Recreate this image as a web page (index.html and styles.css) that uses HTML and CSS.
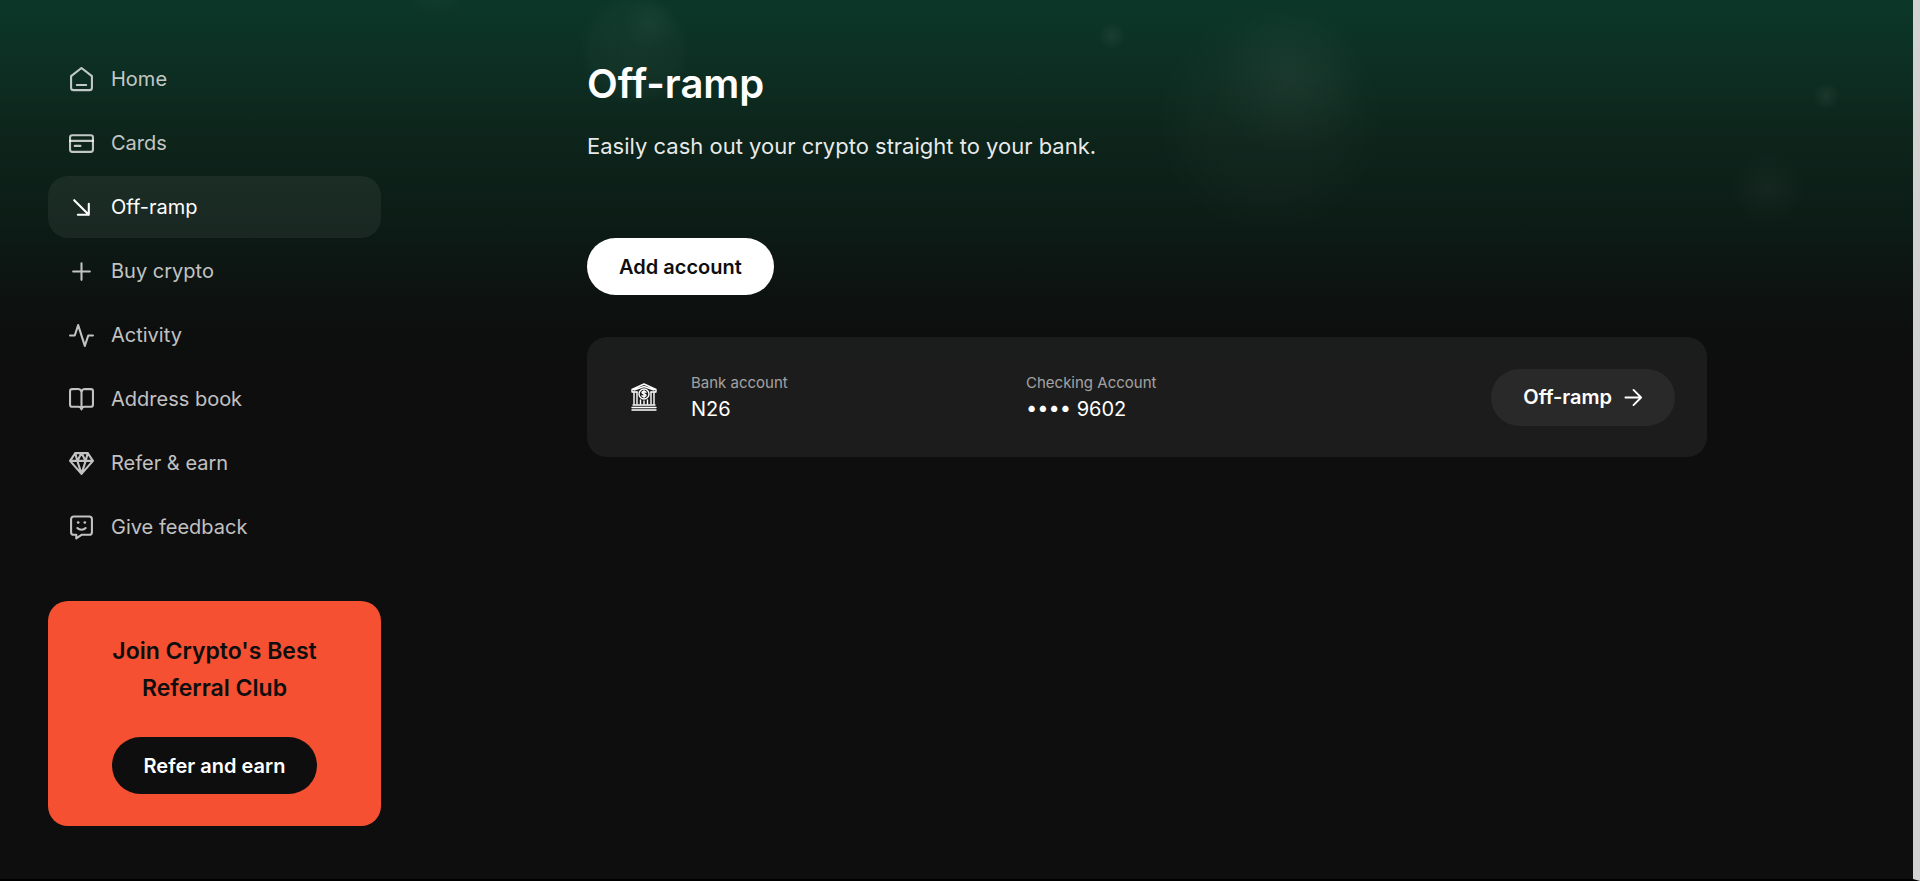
FILE: index.html
```html
<!DOCTYPE html>
<html lang="en">
<head>
    <meta charset="UTF-8">
    <meta name="viewport" content="width=device-width, initial-scale=1.0">
    <title>Off-ramp</title>
    <link rel="stylesheet" href="styles.css">
</head>
<body>
    <div class="page">
        <aside class="sidebar">
            <nav>
                <ul class="menu">
                    <li><a href="#home">
                        <svg class="icon" viewBox="0 0 24 24"><path d="M2 8.700 12 1l10 7.700v11.100a2.400 2.400 0 0 1-2.400 2.400H4.400A2.400 2.400 0 0 1 2 19.800z"/><path d="M7.500 17.200h9"/></svg>
                        Home
                    </a></li>
                    <li><a href="#cards">
                        <svg class="icon" viewBox="0 0 24 24"><rect x="1" y="4" width="22" height="16" rx="2.200"/><path d="M1 9.500h22M5.500 14.300h5.500"/></svg>
                        Cards
                    </a></li>
                    <li><a href="#off-ramp" class="active">
                        <svg class="icon" viewBox="0 0 24 24"><path d="m5 5 14 14M19 8.500V19H8.500"/></svg>
                        Off-ramp
                    </a></li>
                    <li><a href="#buy">
                        <svg class="icon" viewBox="0 0 24 24"><path d="M12 4v16M4 12h16"/></svg>
                        Buy crypto
                    </a></li>
                    <li><a href="#activity">
                        <svg class="icon" viewBox="0 0 24 24"><path d="M1 12h4.500l3.300-10 6.400 20 3.300-10H23"/></svg>
                        Activity
                    </a></li>
                    <li><a href="#address-book">
                        <svg class="icon" viewBox="0 0 24 24"><path d="M12 5a3.500 3.500 0 0 0-3.500-3H3a2 2 0 0 0-2 2v13a2 2 0 0 0 2 2h6a3 3 0 0 1 3 2.500 3 3 0 0 1 3-2.500h6a2 2 0 0 0 2-2V4a2 2 0 0 0-2-2h-5.500A3.500 3.500 0 0 0 12 5zM12 5v16"/></svg>
                        Address book
                    </a></li>
                    <li><a href="#refer">
                        <svg class="icon" viewBox="0 0 24 24"><path d="M6 2h12l5 7.500-11 12.500L1 9.500zM1 9.500h22M12 2 8 9.500 12 22l4-12.500zM6 2l2 7.500M18 2l-2 7.500"/></svg>
                        Refer &amp; earn
                    </a></li>
                    <li><a href="#feedback">
                        <svg class="icon" viewBox="0 0 24 24"><path d="M4.500 1.500h15A2.500 2.500 0 0 1 22 4v12.500a2.500 2.500 0 0 1-2.500 2.500H12l-5 3.500V19H4.500A2.500 2.500 0 0 1 2 16.500V4a2.500 2.500 0 0 1 2.500-2.500z"/><path d="M8 12.500c2 2.300 6 2.300 8 0"/><circle class="dot" cx="8.800" cy="7.200" r="1.300"/><circle class="dot" cx="15.200" cy="7.200" r="1.300"/></svg>
                        Give feedback
                    </a></li>
                </ul>
            </nav>

            <section class="promo">
                <h2>Join Crypto's Best Referral Club</h2>
                <button type="button" class="btn btn-dark">Refer and earn</button>
            </section>
        </aside>

        <main>
            <div class="container">
                <h1>Off-ramp</h1>
                <p class="intro">Easily cash out your crypto straight to your bank.</p>
                <button type="button" class="btn btn-light">Add account</button>

                <section class="account">
                    <svg class="bank-icon" viewBox="0 0 26 28">
                        <path d="M1 9V6.500L13 1l12 5.500V9h-5M1 9h5M3 7l10-3.500L23 7"/>
                        <path d="M3 9v12M6 9v12M20 9v12M23 9v12M9.500 17v4M13 18v3M16.500 17v4"/>
                        <path d="M2 22h22M1 24.500h24M1 27h24"/>
                        <circle cx="13" cy="11" r="5"/>
                        <path d="M15 9.200c-1-1-4-1-4 .4 0 1.600 4 1 4 2.700 0 1.500-3 1.500-4 .4M13 7.500v7"/>
                    </svg>
                    <dl class="details">
                        <div>
                            <dt>Bank account</dt>
                            <dd>N26</dd>
                        </div>
                        <div>
                            <dt>Checking Account</dt>
                            <dd>•••• 9602</dd>
                        </div>
                    </dl>
                    <button type="button" class="btn btn-grey">
                        Off-ramp
                        <svg class="arrow" viewBox="0 0 20 20"><path d="M1.500 10h16.500M10 2l8 8-8 8"/></svg>
                    </button>
                </section>
            </div>
        </main>
    </div>
</body>
</html>
```
FILE: styles.css
```css
* {
    margin: 0;
    padding: 0;
    box-sizing: border-box;
    font-family: 'Inter', sans-serif;
}

body {
    background-color: #0e0e0e;
    color: #fff;
}

.page {
    display: flex;
    min-height: 100vh;
    padding: 48px 0 48px 48px;
    border-right: 7px solid #d2d2d2;
    border-bottom: 2px solid #000;
    /* soft light spots over the green fade */
    background:
        radial-gradient(circle at 635px 50px, rgba(255, 255, 255, 0.03) 0, rgba(255, 255, 255, 0.02) 44px, transparent 56px),
        radial-gradient(circle at 650px 24px, rgba(255, 255, 255, 0.03) 0, transparent 26px),
        radial-gradient(circle at 1112px 36px, rgba(255, 255, 255, 0.06) 0, transparent 14px),
        radial-gradient(circle at 1270px 120px, rgba(255, 255, 255, 0.02) 0, rgba(255, 255, 255, 0.015) 70px, transparent 116px),
        radial-gradient(circle at 1290px 80px, rgba(255, 255, 255, 0.04) 0, transparent 76px),
        radial-gradient(circle at 1826px 96px, rgba(255, 255, 255, 0.06) 0, transparent 14px),
        radial-gradient(circle at 1768px 188px, rgba(255, 255, 255, 0.03) 0, transparent 38px),
        radial-gradient(circle at 436px -20px, rgba(255, 255, 255, 0.04) 0, transparent 36px),
        linear-gradient(#0b3729 0, #0d2f23 64px, #0d241b 140px, #0c1c16 220px, #0d1412 280px, #0c0f0e 330px, #0e0e0e 360px);
}

.sidebar {
    width: 333px;
    flex-shrink: 0;
}

.menu {
    display: flex;
    flex-direction: column;
    gap: 2px;
    list-style: none;
}

.menu a {
    display: flex;
    align-items: center;
    gap: 17px;
    height: 62px;
    padding: 0 21px;
    border-radius: 20px;
    color: rgba(255, 255, 255, 0.75);
    font-size: 20px;
    text-decoration: none;
}

.menu a:hover,
.menu a.active {
    background-color: rgba(255, 255, 255, 0.06);
    color: #fff;
}

svg {
    flex-shrink: 0;
    fill: none;
    stroke: currentColor;
    stroke-width: 2;
    stroke-linecap: round;
    stroke-linejoin: round;
}

.icon {
    width: 25px;
    height: 25px;
}

.dot {
    fill: currentColor;
    stroke: none;
}

.promo {
    display: flex;
    flex-direction: column;
    align-items: center;
    gap: 30px;
    margin-top: 43px;
    padding: 32px;
    border-radius: 20px;
    background-color: #f55031;
    color: #0e0e0e;
    text-align: center;
}

.promo h2 {
    max-width: 240px;
    font-size: 23px;
    font-weight: 600;
    line-height: 37px;
}

.btn {
    display: inline-flex;
    align-items: center;
    justify-content: center;
    gap: 12px;
    height: 57px;
    padding: 0 32px;
    border: none;
    border-radius: 29px;
    font-size: 20px;
    font-weight: 600;
    white-space: nowrap;
    cursor: pointer;
}

.btn-dark {
    background-color: #0e0e0e;
    color: #fff;
}

.btn-light {
    background-color: #fff;
    color: #0e0e0e;
}

.btn-grey {
    background-color: #292929;
    color: #fff;
}

main {
    flex: 1;
    padding: 0 48px;
}

.container {
    max-width: 1120px;
    margin: 0 auto;
}

h1 {
    padding-top: 8px;
    font-size: 40px;
    font-weight: 600;
    line-height: 56px;
}

.intro {
    margin: 16px 0 73px;
    font-size: 22px;
    line-height: 37px;
    color: rgba(255, 255, 255, 0.92);
}

.account {
    display: flex;
    align-items: center;
    min-height: 120px;
    margin-top: 42px;
    padding: 24px 32px;
    border-radius: 20px;
    background-color: rgba(255, 255, 255, 0.06);
}

.bank-icon {
    width: 26px;
    height: 28px;
    margin: 0 34px 0 12px;
    stroke-width: 1.4;
}

.details {
    display: flex;
    flex: 1;
}

.details div {
    width: 335px;
}

.details dt {
    color: rgba(255, 255, 255, 0.6);
    font-size: 15px;
    line-height: 24px;
}

.details dd {
    font-size: 20px;
    line-height: 28px;
}

.arrow {
    width: 19px;
    height: 19px;
}
```
